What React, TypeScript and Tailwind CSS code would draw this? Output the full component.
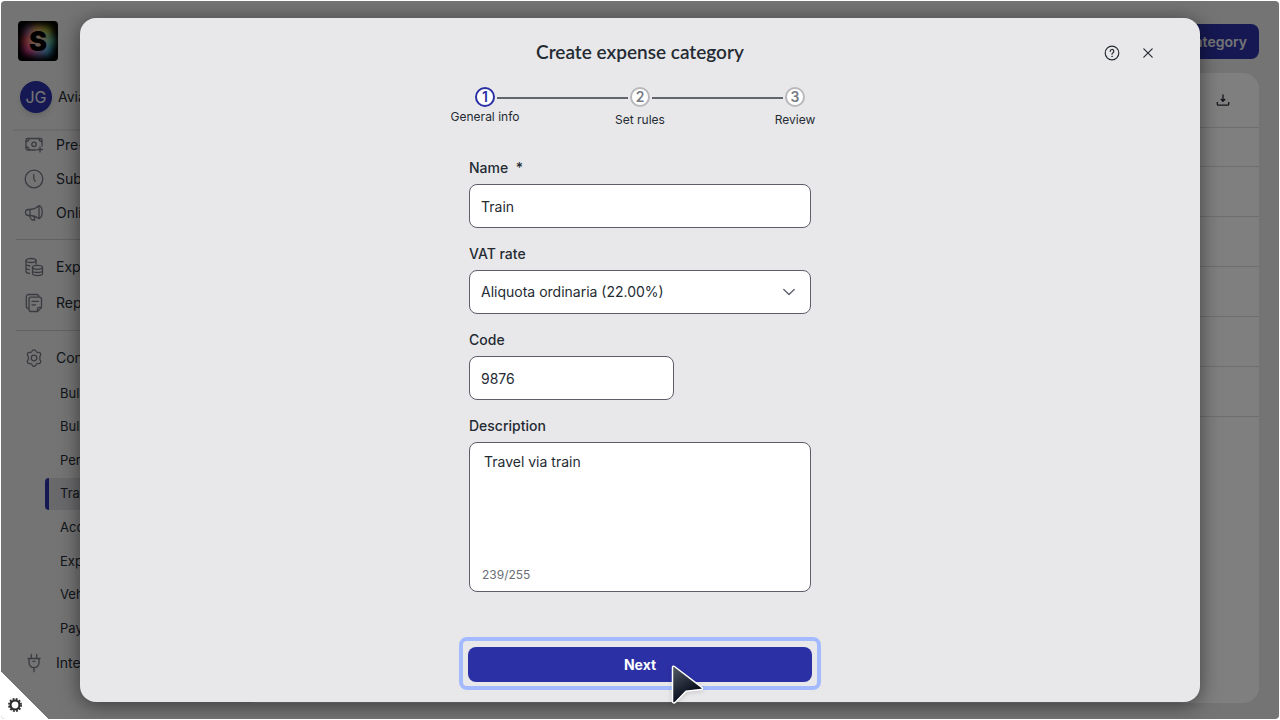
import { useState, type ReactNode } from "react";

const ICONS: Record<string, ReactNode> = {
  cash: (
    <>
      <path d="M12 15H3.500A1.500 1.500 0 0 1 2 13.500V5a1.500 1.500 0 0 1 1.500-1.500h13A1.500 1.500 0 0 1 18 5v6" />
      <path d="M2 6.500A3 3 0 0 0 5 3.500M2 12a3 3 0 0 1 3 3M18 6.500a3 3 0 0 1-3-3" />
      <circle cx="10" cy="9.300" r="2.200" />
      <path d="M16 12v5M13.500 14.500h5" />
    </>
  ),
  clock: (
    <>
      <circle cx="10" cy="10" r="8.800" />
      <path d="M9.800 5.500v4.500l1.500 2.300" />
    </>
  ),
  megaphone: (
    <>
      <path d="M6 6.500H4.500a2.600 2.600 0 0 0 0 6H6c3.500 0 6.500 1.300 9 3V2.700C12.500 5 9.500 6.300 6 6.500Z" />
      <path d="M15 2.700c2.400.6 3.200 3.800 3.200 6.400s-.8 5.900-3.200 6.400M6 6.500v6M5.500 12.500c.3 2 1 3.500 2.500 4.500h2.800l-.8-3.500" />
    </>
  ),
  coins: (
    <>
      <ellipse cx="7" cy="3.500" rx="5" ry="2" />
      <path d="M2 3.500v11c0 .9 1.300 1.700 3.500 2M12 3.500V7M2 7c0 .9 1.500 1.700 4 2M2 10.700c0 .8 1.200 1.500 3.200 1.900" />
      <ellipse cx="13.500" cy="10.300" rx="5" ry="2" />
      <path d="M8.500 10.300v6.200c0 1.200 2.200 2.100 5 2.100s5-.9 5-2.100v-6.200M8.500 13.400c0 1.200 2.200 2.100 5 2.100s5-.9 5-2.100" />
    </>
  ),
  docs: (
    <>
      <path d="M4.500 15.500A2.200 2.200 0 0 1 2.300 13V3.700A2.200 2.200 0 0 1 4.500 1.500h8.300A2.200 2.200 0 0 1 15 3.700" />
      <path d="M7 4.200h8.500a2 2 0 0 1 2 2v8.300L13.500 18.500H7a2 2 0 0 1-2-2V6.200a2 2 0 0 1 2-2Z" />
      <path d="M17.500 14.300h-2.500a1.500 1.500 0 0 0-1.500 1.500v2.700M8 8.300h6.500M8 11.800h3.500" />
    </>
  ),
  gear: (
    <>
      <path d="M8 3.200c.5-1.900 3.500-1.900 4 0 .3 1 1.300 1.500 2.200 1.200 1.900-.6 3.300 1.900 2 3.300-.3.300-.4.600-.4 2.300s.1 2 .4 2.300c1.300 1.400-.1 3.900-2 3.300-.9-.3-1.900.2-2.200 1.200-.5 1.900-3.500 1.900-4 0-.3-1-1.300-1.500-2.200-1.200-1.900.6-3.300-1.900-2-3.300.3-.3 1-1.300.400-2.300 .6-1-.1-2-.4-2.300-1.300-1.400.1-3.900 2-3.300.9.300 1.900-.2 2.200-1.200Z" />
      <circle cx="10" cy="10" r="2.800" />
    </>
  ),
  plug: (
    <>
      <path d="M4 5.500h12M5 5.500v4.200a5 5 0 0 0 10 0V5.500M7.300 5.500V1.500M12.700 5.500V1.500M10 14.700v4M9 8.300h2" />
    </>
  ),
};

const SPENDING = [
  { icon: "cash", label: "Pre-paid" },
  { icon: "clock", label: "Subscriptions" },
  { icon: "megaphone", label: "Online ads" },
];

const REPORTING = [
  { icon: "coins", label: "Expenses" },
  { icon: "docs", label: "Reports" },
];

const CONFIG = ["Bulk", "Bulk edit", "Permissions", "Transactions", "Accounts", "Expenses", "Vehicles", "Payments"];

const STEPS = ["General info", "Set rules", "Review"];

function Icon({ name }: { name: string }) {
  return (
    <svg
      viewBox="0 0 20 20"
      className="size-5 shrink-0 text-[#757781]"
      fill="none"
      stroke="currentColor"
      strokeWidth="1.3"
      strokeLinecap="round"
      strokeLinejoin="round"
    >
      {ICONS[name]}
    </svg>
  );
}

function NavItem({ icon, label }: { icon: string; label: string }) {
  return (
    <a href="#" className="flex h-7 items-center gap-3 pl-6 whitespace-nowrap">
      <Icon name={icon} />
      {label}
    </a>
  );
}

function Logo() {
  return (
    <svg viewBox="0 0 40 40" className="size-10">
      <defs>
        <filter id="glow" x="-50%" y="-50%" width="200%" height="200%">
          <feGaussianBlur stdDeviation="3.200" />
        </filter>
        <clipPath id="tile">
          <rect width="40" height="40" rx="4" />
        </clipPath>
      </defs>
      <rect width="40" height="40" rx="4" fill="#000" />
      <g clipPath="url(#tile)">
        <g filter="url(#glow)">
          <circle cx="12" cy="11" r="6" fill="#8c5a8c" />
          <circle cx="20" cy="10" r="6" fill="#e0a050" />
          <circle cx="28" cy="11" r="6" fill="#a0b030" />
          <circle cx="31" cy="20" r="6" fill="#50b890" />
          <circle cx="28" cy="29" r="6" fill="#40a8d8" />
          <circle cx="20" cy="30" r="6" fill="#8070b8" />
          <circle cx="11" cy="28" r="6" fill="#d83890" />
          <circle cx="10" cy="20" r="6" fill="#e84858" />
          <circle cx="20" cy="20" r="8" fill="#d8b8a0" />
        </g>
        <text x="20" y="30" textAnchor="middle" fontSize="27" className="font-['Inter'] font-black" fill="#000">
          S
        </text>
      </g>
    </svg>
  );
}

function Sidebar() {
  return (
    <aside className="w-60 shrink-0 pt-5 text-sm">
      <div className="pl-[17px]">
        <Logo />
      </div>
      <div className="mt-5 flex items-center gap-1.5 pl-[19px]">
        <span className="flex size-8 items-center justify-center rounded-full bg-[#2b31a5] text-base text-[#e8e8ea] shadow-md">
          JG
        </span>
        Aviato
      </div>
      <hr className="mt-4 ml-3 border-t-2 border-[#d8d8da]" />
      <nav className="-ml-px">
        <div className="flex flex-col gap-1.5">
          {SPENDING.map((n) => (
            <NavItem key={n.label} {...n} />
          ))}
        </div>
        <hr className="mt-3 ml-4 border-[#c4c4c8]" />
        <div className="mt-[13px] flex flex-col gap-2">
          {REPORTING.map((n) => (
            <NavItem key={n.label} {...n} />
          ))}
        </div>
        <hr className="mt-[13px] ml-4 border-[#c4c4c8]" />
        <div className="mt-[13px]">
          <NavItem icon="gear" label="Configuration" />
        </div>
        <ul className="mt-[5px] ml-[45px] flex h-[267px] flex-col justify-between text-[13px]">
          {CONFIG.map((label, i) => (
            <li key={label}>
              <a
                href="#"
                className={
                  i === 3
                    ? "flex h-8 items-center rounded-l border-l-4 border-[#2b31a5] bg-[#d2d2d6] pl-[11px]"
                    : "flex h-8 items-center pl-[15px]"
                }
              >
                {label}
              </a>
            </li>
          ))}
        </ul>
        <div className="mt-[5px]">
          <NavItem icon="plug" label="Integrations" />
        </div>
      </nav>
    </aside>
  );
}

function Background() {
  return (
    <div className="flex flex-1">
      <Sidebar />
      <main className="flex flex-1 flex-col pt-[23px] pr-5 pb-4">
        <button
          type="button"
          className="h-[35px] self-end rounded-lg bg-[#2b31a5] px-3 text-sm font-semibold text-[#e8e8ea]"
        >
          Create category
        </button>
        <section className="mt-3.5 flex-1 rounded-2xl bg-white">
          <div className="flex h-[55px] items-center justify-end border-b border-[#dcdcde] px-[29px]">
            <button type="button" aria-label="Download">
              <svg viewBox="0 0 14 14" className="size-3.5" fill="none" stroke="#252b33" strokeWidth="1.3">
                <path d="M7 1.500v6.500M4.800 6 7 8.300 9.200 6M1.300 9v2.200c0 .6.400 1 1 1h9.400c.6 0 1-.4 1-1V9" />
              </svg>
            </button>
          </div>
          <div className="h-[39px] border-b border-[#dcdcde]" />
          {[1, 2, 3, 4, 5].map((row) => (
            <div key={row} className="h-[50px] border-b border-[#dcdcde]" />
          ))}
        </section>
      </main>
    </div>
  );
}

function Stepper() {
  return (
    <ol className="mx-auto flex w-[330px] gap-0.5">
      {STEPS.map((label, i) => (
        <li key={label} className={i > 0 ? "flex flex-1 gap-0.5" : "flex"}>
          {i > 0 ? <span className="mt-2.5 h-0.5 flex-1 bg-[#62666f]" /> : null}
          <span className="flex w-5 flex-col items-center">
            <span
              className={
                i === 0
                  ? "flex size-5 items-center justify-center rounded-full border-2 border-[#2b31a5] bg-white text-sm font-semibold text-[#2b31a5]"
                  : "flex size-5 items-center justify-center rounded-full border-2 border-[#b9b9bd] bg-white text-sm font-semibold text-[#777a82]"
              }
            >
              {i + 1}
            </span>
            <span className={i === 0 ? "mt-0.5 text-xs whitespace-nowrap" : "mt-[5px] text-xs whitespace-nowrap"}>
              {label}
            </span>
          </span>
        </li>
      ))}
    </ol>
  );
}

function Field({ id, label, children }: { id: string; label: string; children: ReactNode }) {
  return (
    <div className="flex flex-col gap-1.5">
      <label htmlFor={id} className="text-sm font-medium whitespace-pre">
        {label}
      </label>
      {children}
    </div>
  );
}

export default function App() {
  const [name, setName] = useState("Train");
  const [code, setCode] = useState("9876");
  const [description, setDescription] = useState("Travel via train");

  return (
    <div className="flex min-h-screen flex-col bg-white p-px font-['Inter',sans-serif] text-[#252b33]">
      <div className="relative flex flex-1 overflow-hidden rounded bg-[#e8e8ea]">
        <Background />

        <div className="absolute inset-0 flex items-center justify-center bg-black/50 px-[79px]">
          <div
            role="dialog"
            aria-labelledby="title"
            className="w-full rounded-2xl bg-[#e8e8ea] pb-3 shadow-[0_3px_20px_rgba(0,0,0,0.5)]"
          >
            <header className="grid h-[69px] grid-cols-[1fr_auto_1fr] items-center px-11">
              <h1 id="title" className="col-start-2 font-['Lato',sans-serif] text-[19px] font-semibold">
                Create expense category
              </h1>
              <div className="flex justify-end gap-5">
                <button type="button" aria-label="Help">
                  <svg viewBox="0 0 16 16" className="size-4" fill="none" stroke="currentColor" strokeLinecap="round">
                    <circle cx="8" cy="8" r="6.800" strokeWidth="1.200" />
                    <path d="M6.200 6.300a1.800 1.800 0 1 1 2.600 1.600c-.5.300-.8.600-.8 1.300" strokeWidth="1.200" />
                    <circle cx="8" cy="11.300" r=".4" fill="currentColor" strokeWidth=".6" />
                  </svg>
                </button>
                <button type="button" aria-label="Close">
                  <svg viewBox="0 0 16 16" className="size-4" fill="none" stroke="currentColor" strokeWidth="1.200">
                    <path d="m3.800 3.800 8.400 8.400M12.200 3.800l-8.400 8.400" strokeLinecap="round" />
                  </svg>
                </button>
              </div>
            </header>

            <Stepper />

            <form className="mx-auto mt-[30px] flex w-[342px] flex-col gap-4" onSubmit={(e) => e.preventDefault()}>
              <Field id="name" label="Name  *">
                <input
                  id="name"
                  value={name}
                  onChange={(e) => setName(e.target.value)}
                  className="h-11 rounded-lg border border-[#5c5f6b] bg-white px-[11px] text-sm"
                />
              </Field>
              <Field id="vat" label="VAT rate">
                <div className="relative">
                  <select
                    id="vat"
                    className="h-11 w-full appearance-none rounded-lg border border-[#5c5f6b] bg-white px-[11px] text-sm"
                  >
                    <option>Aliquota ordinaria (22.00%)</option>
                  </select>
                  <svg
                    viewBox="0 0 16 16"
                    className="pointer-events-none absolute top-3.5 right-3.5 size-4"
                    fill="none"
                    stroke="#5c5f6b"
                    strokeWidth="1.300"
                    strokeLinecap="round"
                    strokeLinejoin="round"
                  >
                    <path d="m2.800 5.500 5.200 5 5.200-5" />
                  </svg>
                </div>
              </Field>
              <Field id="code" label="Code">
                <input
                  id="code"
                  value={code}
                  onChange={(e) => setCode(e.target.value)}
                  className="h-11 w-[205px] rounded-lg border border-[#5c5f6b] bg-white px-[11px] text-sm"
                />
              </Field>
              <Field id="description" label="Description">
                <div className="flex flex-col rounded-lg border border-[#5c5f6b] bg-white">
                  <textarea
                    id="description"
                    value={description}
                    onChange={(e) => setDescription(e.target.value)}
                    className="h-[124px] resize-none px-3.5 pt-[9px] text-sm outline-none"
                  />
                  <span className="pb-2 pl-3 text-xs text-[#6b6e78]">{255 - description.length}/255</span>
                </div>
              </Field>

              <div className="relative -mx-2.5 mt-[29px] rounded-lg border-4 border-[#a3baff] px-[5px] pt-1.5 pb-1">
                <button
                  type="submit"
                  className="h-[35px] w-full rounded-lg bg-[#2b31a5] text-sm font-bold text-white"
                >
                  Next
                </button>
                <svg
                  viewBox="0 0 36 42"
                  className="pointer-events-none absolute top-[22px] left-[206px] h-[42px] w-9 drop-shadow-sm"
                >
                  <defs>
                    <linearGradient id="arrow" x1="0" y1="0" x2="0.500" y2="1">
                      <stop offset="0.100" stopColor="#4b535e" />
                      <stop offset="0.800" stopColor="#0c1220" />
                    </linearGradient>
                  </defs>
                  <path
                    d="M3.500 4.500c0-1.300 1-1.700 2-1L32.800 24.300c1.100.9.800 2.100-.6 2.200l-15.200 1.700-10.800 11.200c-1.100 1-2.700.6-2.700-.9Z"
                    fill="url(#arrow)"
                    stroke="#fff"
                    strokeWidth="1.500"
                    strokeLinejoin="round"
                  />
                </svg>
              </div>
            </form>
          </div>
        </div>

        <button
          type="button"
          aria-label="Settings"
          className="absolute bottom-0 left-0 flex size-12 items-end bg-[linear-gradient(45deg,white_50%,transparent_50%)] pb-[7px] pl-[7px]"
        >
          <svg viewBox="0 0 14 14" className="size-3.5" fill="none" stroke="#2b2b2b">
            <circle cx="7" cy="7" r="4.500" strokeWidth="2.200" />
            <circle cx="7" cy="7" r="6.100" strokeWidth="1.700" strokeDasharray="1.900 1.294" />
          </svg>
        </button>
      </div>
    </div>
  );
}
